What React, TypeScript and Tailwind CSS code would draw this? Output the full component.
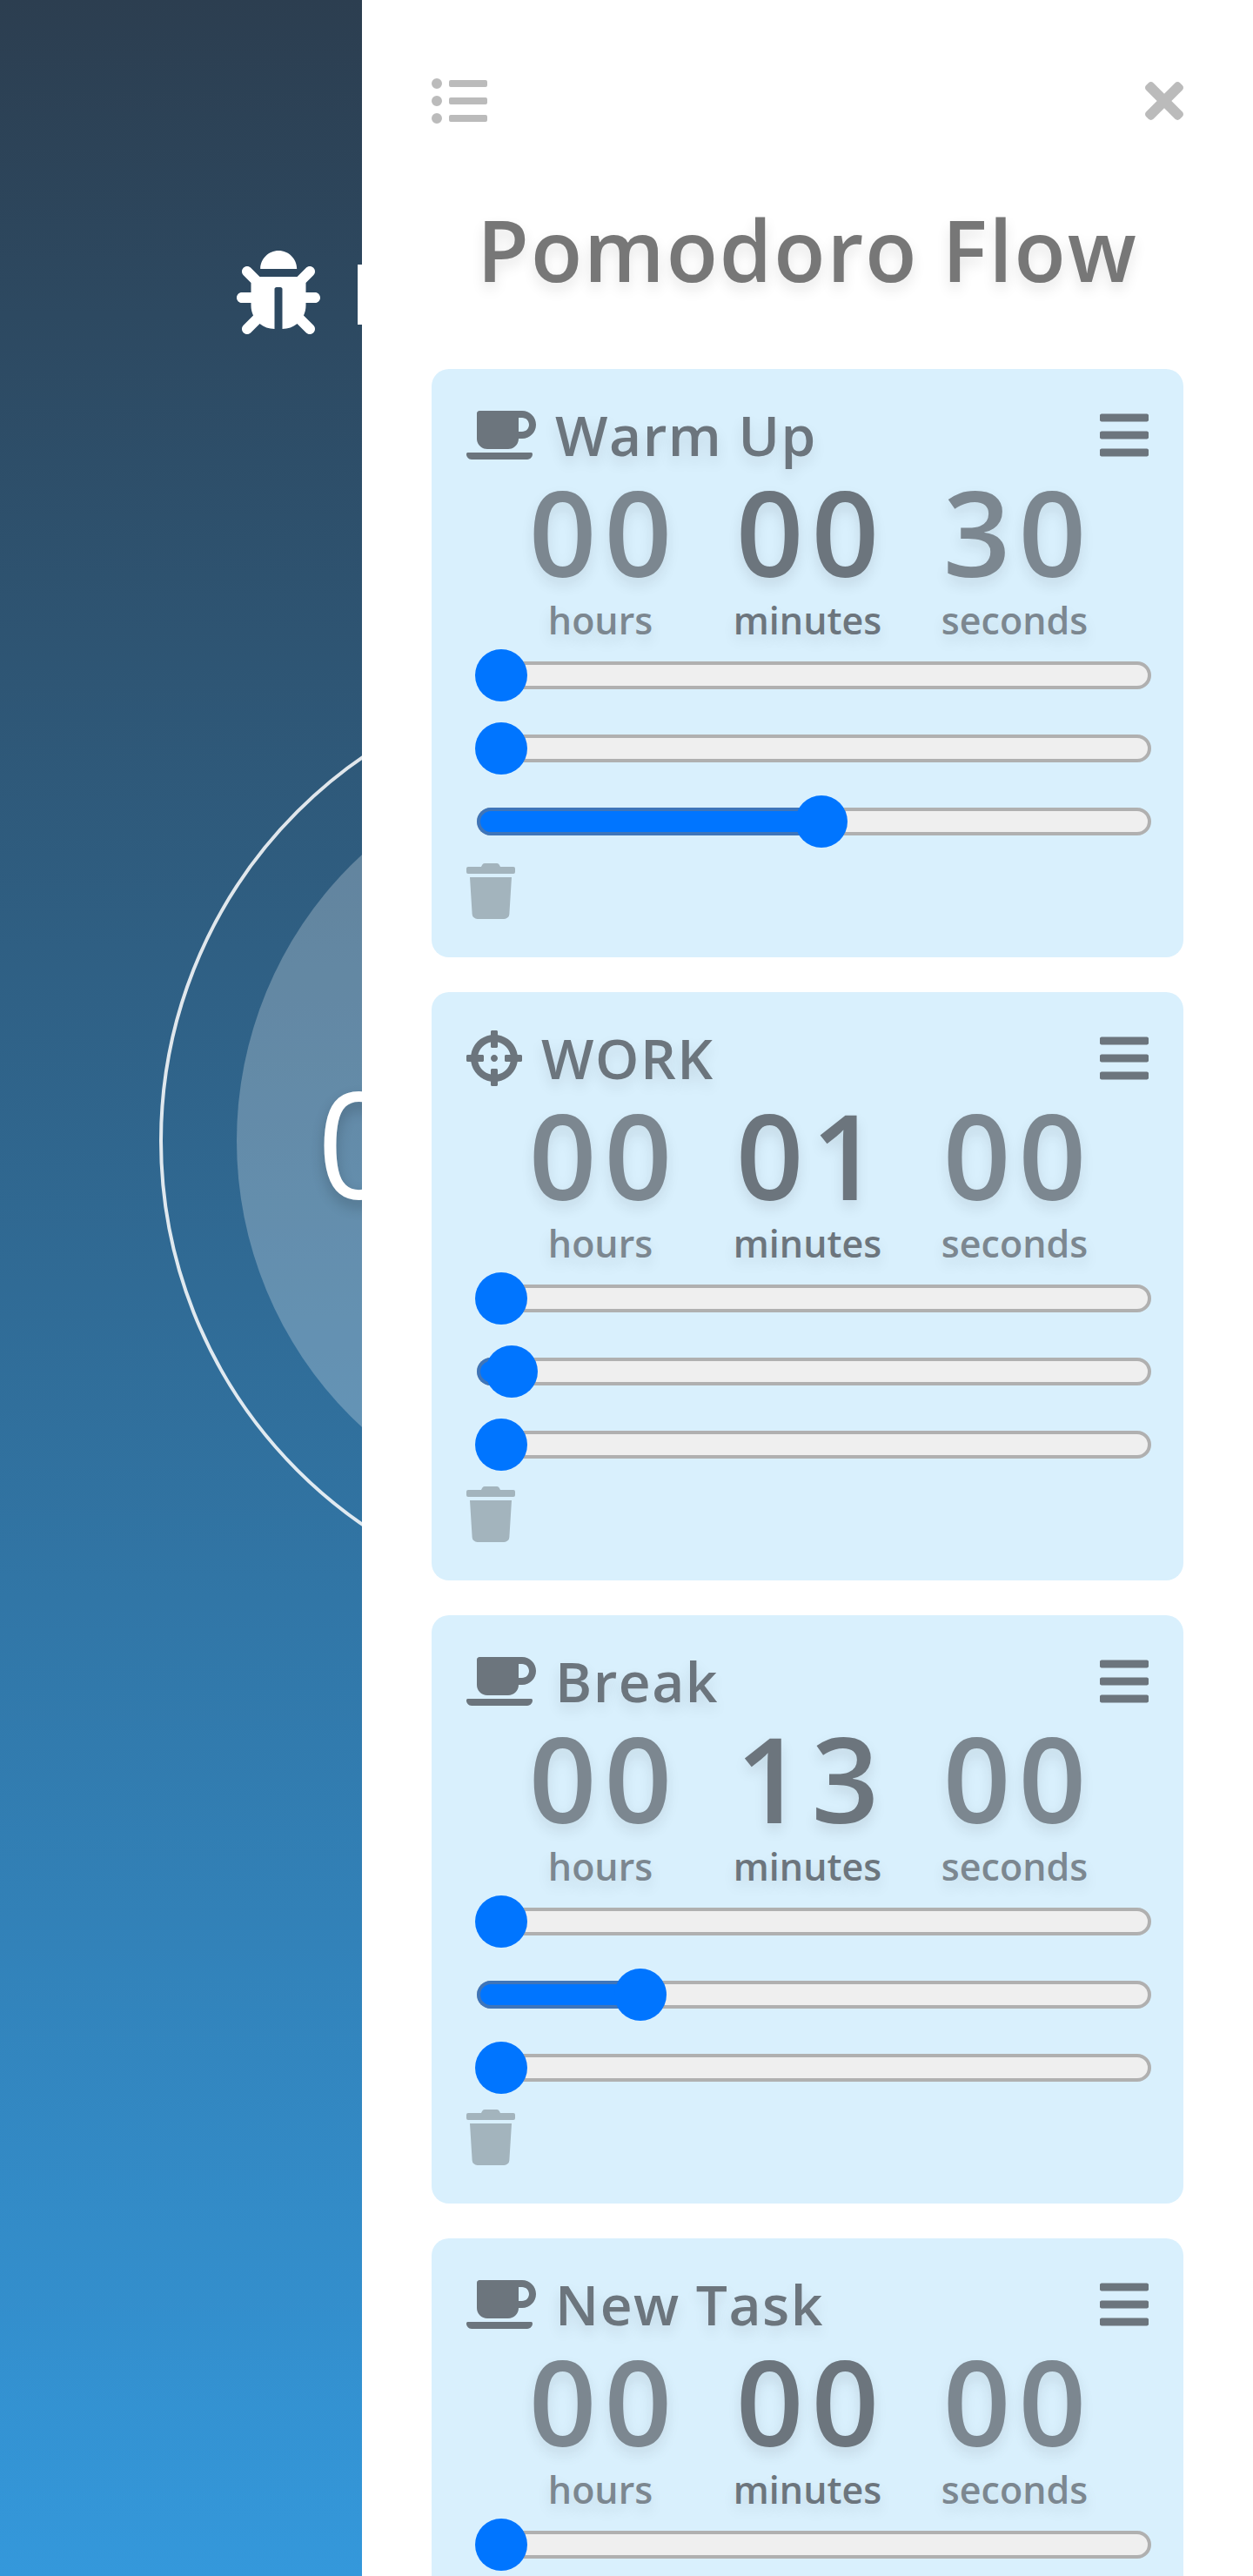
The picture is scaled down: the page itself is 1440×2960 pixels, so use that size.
import { FaBug, FaCoffee, FaCrosshairs, FaBars, FaTrash, FaListUl, FaTimes } from "react-icons/fa";

const font = { fontFamily: '"Open Sans", "Noto Sans", sans-serif' };

function Slider({ thumb }: { thumb: number }) {
  const filled = thumb > 30;
  return (
    <div className="relative h-8 ml-3 -mr-[3px]">
      <div className="h-8 rounded-2xl border-4 border-[#b0b0b0] bg-[#efefef]" />
      {filled && (
        <div className="absolute left-0 top-0 h-8 rounded-l-2xl border-4 border-r-0 border-[#3f75b9] bg-[#0075ff]" style={{ width: thumb }} />
      )}
      <div className="absolute -top-[14px] w-[60px] h-[60px] rounded-full bg-[#0075ff]" style={{ left: thumb - 30 }} />
    </div>
  );
}

function Unit({ value, label, strong }: { value: string; label: string; strong?: boolean }) {
  return (
    <div className={`w-[238px] flex flex-col items-center font-[650] text-[#6c757d] ${strong ? "" : "opacity-85"}`}>
      <div className="h-[158px] leading-[158px] text-[136px] tracking-[9px] pl-[9px] [text-shadow:0_8px_16px_rgba(0,0,0,0.1)]">{value}</div>
      <div className="h-[70px] pt-[2px] leading-[42px] text-[43px] [text-shadow:0_8px_16px_rgba(0,0,0,0.1)]">{label}</div>
    </div>
  );
}

function Card({ icon, title, values, thumbs, gap }: { icon: "cup" | "target"; title: string; values: string[]; thumbs: number[]; gap: string }) {
  return (
    <section className={`bg-[#d9f0fd] rounded-[20px] px-10 pt-11 pb-11 h-[676px] shrink-0 ${gap}`}>
      <div className="flex items-center justify-between h-16 text-[#6c757d]">
        <div className="flex items-center gap-[22px]">
          {icon === "cup" ? <FaCoffee className="w-20 h-16" /> : <FaCrosshairs className="w-16 h-16" />}
          <h2 className="text-[64px] leading-none font-[650] tracking-[1.5px] [text-shadow:0_8px_16px_rgba(0,0,0,0.1)]">{title}</h2>
        </div>
        <FaBars className="w-14 h-16" />
      </div>
      <div className="flex justify-center h-[228px]">
        <Unit value={values[0]} label="hours" />
        <Unit value={values[1]} label="minutes" strong />
        <Unit value={values[2]} label="seconds" />
      </div>
      <div className="flex flex-col gap-[52px]">
        {thumbs.map((t, i) => (
          <Slider key={i} thumb={t} />
        ))}
      </div>
      <FaTrash className="mt-8 w-14 h-16 text-[#a3b4bd]" />
    </section>
  );
}

export default function App() {
  return (
    <div className="relative w-[1440px] h-[2960px] overflow-hidden bg-linear-to-b/srgb from-[#2c3e50] to-[#3498db]" style={font}>
      <main className="pt-[288px] text-white">
        <div className="flex items-center gap-[34px] pl-[272px] h-24 whitespace-nowrap">
          <FaBug size={96} />
          <span className="text-[96px] leading-none font-semibold">Debug Mode</span>
        </div>
        <div className="mt-[390px] ml-[183px] w-[1074px] h-[1074px] rounded-full border-4 border-white/85 flex items-center justify-center">
          <div className="w-[896px] h-[896px] rounded-full bg-white/25 flex items-center pl-[92px]">
            <span className="text-[170px] font-medium leading-none whitespace-nowrap [text-shadow:0_8px_16px_rgba(0,0,0,0.2)]">00:00:30</span>
          </div>
        </div>
      </main>
      <aside className="absolute top-0 right-0 w-[1024px] h-full bg-white px-20 pt-[84px] overflow-hidden flex flex-col">
        <div className="flex justify-between items-center h-16 text-[#bbbbbb]">
          <FaListUl className="w-16 h-16" />
          <FaTimes className="w-11 h-16" />
        </div>
        <h1 className="mt-[68px] mb-[68px] h-[140px] leading-[140px] text-center text-[97px] font-[650] tracking-[2px] text-[#777777] [text-shadow:0_8px_16px_rgba(0,0,0,0.1)]">Pomodoro Flow</h1>
        <Card icon="cup" title="Warm Up" values={["00", "00", "30"]} thumbs={[28, 28, 396]} gap="mb-10" />
        <Card icon="target" title="WORK" values={["00", "01", "00"]} thumbs={[28, 40, 28]} gap="mb-10" />
        <Card icon="cup" title="Break" values={["00", "13", "00"]} thumbs={[28, 188, 28]} gap="mb-10" />
        <Card icon="cup" title="New Task" values={["00", "00", "00"]} thumbs={[28, 28, 28]} gap="" />
      </aside>
    </div>
  );
}
